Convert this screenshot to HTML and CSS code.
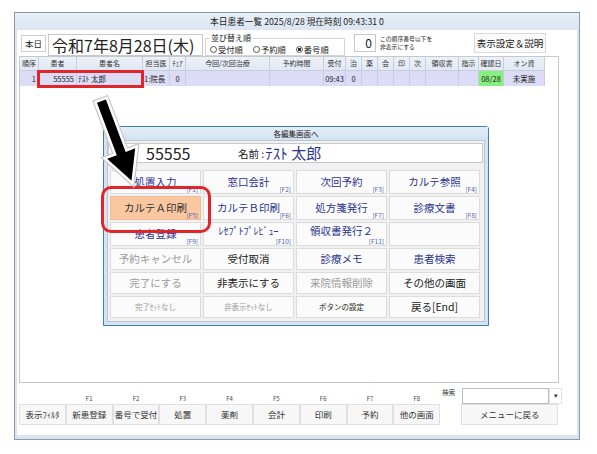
FILE: index.html
```html
<!DOCTYPE html>
<html lang="ja">
<head>
<meta charset="utf-8">
<title>本日患者一覧</title>
<link rel="stylesheet" href="styles.css">
</head>
<body>
<div class="win">
  <div class="win-title">本日患者一覧 2025/8/28 現在時刻 09:43:31 0</div>
  <div class="client">
    <div class="toprow">
      <div class="today-lbl">本日</div>
      <div class="date-box">令和7年8月28日(木)</div>
      <fieldset class="sort">
        <legend>並び替え順</legend>
        <div class="opts">
          <span class="opt"><span class="radio"></span>受付順</span>
          <span class="opt"><span class="radio"></span>予約順</span>
          <span class="opt"><span class="radio on"></span>番号順</span>
        </div>
      </fieldset>
      <div class="zero-box">0</div>
      <div class="hint"><div>この順序番号以下を</div><div>非表示にする</div></div>
      <div class="settings-btn">表示設定＆説明</div>
    </div>
    <div class="list">
      <div class="cols thead">
        <div>順序</div><div>患者</div><div>患者名</div><div>担当医</div><div>ﾁｪｱ</div><div>今回/次回治療</div><div>予約時間</div><div>受付</div><div>治</div><div>薬</div><div>会</div><div>印</div><div>次</div><div>領収書</div><div>指示</div><div>確認日</div><div>オン資</div>
      </div>
      <div class="cols trow">
        <div class="r">1</div><div class="r">55555</div><div class="l">ﾃｽﾄ 太郎</div><div class="l">1:院長</div><div>0</div><div></div><div></div><div>09:43</div><div>0</div><div></div><div></div><div></div><div></div><div></div><div></div><div class="green">08/28</div><div>未実施</div>
      </div>
    </div>
    <div class="bottom">
      <div class="fkeys">
        <div class="fk"><div class="fk-lbl"></div><div class="fk-btn">表示ﾌｨﾙﾀ</div></div>
        <div class="fk"><div class="fk-lbl">F1</div><div class="fk-btn">新患登録</div></div>
        <div class="fk"><div class="fk-lbl">F2</div><div class="fk-btn">番号で受付</div></div>
        <div class="fk"><div class="fk-lbl">F3</div><div class="fk-btn">処置</div></div>
        <div class="fk"><div class="fk-lbl">F4</div><div class="fk-btn">薬剤</div></div>
        <div class="fk"><div class="fk-lbl">F5</div><div class="fk-btn">会計</div></div>
        <div class="fk"><div class="fk-lbl">F6</div><div class="fk-btn">印刷</div></div>
        <div class="fk"><div class="fk-lbl">F7</div><div class="fk-btn">予約</div></div>
        <div class="fk"><div class="fk-lbl">F8</div><div class="fk-btn">他の画面</div></div>
      </div>
      <div class="right-grp">
        <div class="search-row">
          <div class="search-lbl">検索</div>
          <div class="search-input"></div>
          <div class="dd">▾</div>
        </div>
        <div class="menu-btn">メニューに戻る</div>
      </div>
    </div>
  </div>
</div>

<div class="dialog">
  <div class="dlg-title">各編集画面へ</div>
  <div class="dlg-body">
    <div class="idbox">
      <span class="id-lbl">番号</span>
      <span class="id-num">55555</span>
      <span class="name-lbl">名前 :</span>
      <span class="name">ﾃｽﾄ 太郎</span>
    </div>
    <div class="btn-grid">
      <div class="b blue">処置入力<span class="fkey">[F1]</span></div>
      <div class="b blue">窓口会計<span class="fkey">[F2]</span></div>
      <div class="b blue">次回予約<span class="fkey">[F3]</span></div>
      <div class="b blue">カルテ参照<span class="fkey">[F4]</span></div>
      <div class="b orange">カルテＡ印刷<span class="fkey">[F5]</span></div>
      <div class="b blue">カルテＢ印刷<span class="fkey">[F6]</span></div>
      <div class="b blue">処方箋発行<span class="fkey">[F7]</span></div>
      <div class="b blue">診療文書<span class="fkey">[F8]</span></div>
      <div class="b blue">患者登録<span class="fkey">[F9]</span></div>
      <div class="b blue narrow raised">ﾚｾﾌﾟﾄﾌﾟﾚﾋﾞｭｰ<span class="fkey">[F10]</span></div>
      <div class="b blue raised">領収書発行２<span class="fkey">[F11]</span></div>
      <div class="b"></div>
      <div class="b gray">予約キャンセル</div>
      <div class="b black">受付取消</div>
      <div class="b blue">診療メモ</div>
      <div class="b blue">患者検索</div>
      <div class="b gray">完了にする</div>
      <div class="b black">非表示にする</div>
      <div class="b gray">来院情報削除</div>
      <div class="b black">その他の画面</div>
      <div class="b gray small">完了ｾｯﾄなし</div>
      <div class="b gray small">非表示ｾｯﾄなし</div>
      <div class="b black small">ボタンの設定</div>
      <div class="b black">戻る[End]</div>
    </div>
  </div>
</div>

<div class="hl-row"></div>
<div class="hl-btn"></div>

<svg class="arrow" width="597" height="454" viewBox="0 0 597 454">
  <g transform="translate(101 100) rotate(-20.7)">
    <polygon points="-6,0 6,0 6,56 17,56 0,89 -17,56 -6,56" fill="none" stroke="#c8c8c8" stroke-width="5" stroke-linejoin="miter"/>
    <polygon points="-6,0 6,0 6,56 17,56 0,89 -17,56 -6,56" fill="#000" stroke="#fff" stroke-width="2.5" stroke-linejoin="miter"/>
  </g>
</svg>
</body>
</html>
```

FILE: styles.css
```css
* { box-sizing: border-box; }

body {
  margin: 0;
  width: 597px;
  height: 454px;
  position: relative;
  overflow: hidden;
  background: #fff;
  font-family: "Noto Sans CJK JP", "Noto Sans", sans-serif;
  color: #222;
}

/* main window */
.win {
  margin: 12px 0 0 14px;
  width: 566px;
  height: 428px;
  border: 1px solid #8d99a8;
  background: #d9e4f0;
  display: flex;
  flex-direction: column;
}

.win-title {
  height: 17px;
  line-height: 17px;
  text-align: center;
  font-size: 8.7px;
  color: #222;
  background: linear-gradient(#e8eff8, #dbe6f2);
}

.client {
  flex: 1;
  margin: 0 2px 4px;
  background: #fff;
  display: flex;
  flex-direction: column;
}

/* top row */
.toprow {
  height: 26px;
  display: flex;
  align-items: flex-start;
  padding: 3px 0 0 4px;
}

.today-lbl {
  width: 25px;
  height: 17px;
  margin-top: 2px;
  border: 1px solid #d0d0d0;
  font-size: 8.5px;
  line-height: 15px;
  text-align: center;
}

.date-box {
  margin-left: 2px;
  width: 155px;
  height: 22px;
  margin-top: 1px;
  border: 1px solid #c9c9c9;
  font-size: 16px;
  line-height: 20px;
  padding-left: 3px;
  white-space: nowrap;
}

.sort {
  margin: 0 0 0 2px;
  width: 140px;
  height: 23px;
  padding: 0 4px;
  border: 1px solid #d6d6d6;
  min-inline-size: 0;
}

.sort legend {
  font-size: 8px;
  line-height: 10px;
  padding: 0 1px;
  margin-left: 0;
}

.opts {
  display: flex;
  gap: 10px;
  font-size: 8.3px;
  line-height: 10px;
  margin-top: 1px;
}

.opt {
  display: flex;
  align-items: center;
  gap: 1px;
}

.radio {
  width: 7px;
  height: 7px;
  border: 1px solid #555;
  border-radius: 50%;
  display: inline-block;
}

.radio.on {
  background: radial-gradient(circle, #333 0 1.6px, #fff 2px);
}

.zero-box {
  margin-left: 9px;
  width: 22px;
  height: 18px;
  margin-top: 1px;
  border: 1px solid #c9c9c9;
  text-align: right;
  font-size: 12px;
  line-height: 16px;
  padding-right: 3px;
}

.hint {
  margin-left: 4px;
  margin-top: 2px;
  font-size: 5.8px;
  line-height: 8px;
  white-space: nowrap;
}

.settings-btn {
  margin-left: auto;
  margin-right: 31px;
  width: 72px;
  height: 20px;
  border: 1px solid #d9d9d9;
  background: #fafafa;
  font-size: 9.5px;
  line-height: 18px;
  text-align: center;
  white-space: nowrap;
}

/* list */
.list {
  margin-left: 2px;
  width: 540px;
  height: 327px;
  border: 1px solid #c8c8c8;
}

.cols {
  display: grid;
  grid-template-columns: 19px 38px 66px 27px 16px 84px 54px 22px 16px 16px 16px 16px 16px 33px 20px 25px 41px;
  width: 525px;
}

.cols > div {
  white-space: nowrap;
  overflow: hidden;
  text-align: center;
}

.thead > div {
  height: 14px;
  line-height: 13px;
  font-size: 7px;
  background: linear-gradient(#edf1f9, #e2e9f4);
  border-right: 1px solid #c7cedb;
  border-bottom: 1px solid #c7cedb;
  color: #333;
}

.trow > div {
  height: 15px;
  line-height: 15px;
  font-size: 7.5px;
  background: #dcdcf7;
  border-right: 1px solid #cacae4;
  color: #222;
}

.trow > .r { text-align: right; padding-right: 2px; }
.trow > .l { text-align: left; padding-left: 1px; }
.trow > .green { background: #86f07e; }

/* bottom */
.bottom {
  flex: 1;
  display: flex;
  padding: 5px 0 0 2px;
}

.fkeys { display: flex; }

.fk {
  width: 46.8px;
  display: flex;
  flex-direction: column;
}

.fk-lbl {
  height: 16px;
  padding-top: 7px;
  font-size: 6px;
  line-height: 8px;
  text-align: center;
  color: #444;
}

.fk-btn {
  height: 21px;
  border: 1px solid #e0e0e0;
  background: #f7f7f7;
  font-size: 8.5px;
  line-height: 19px;
  text-align: center;
  white-space: nowrap;
  color: #333;
}

.right-grp {
  display: flex;
  flex-direction: column;
}

.search-row {
  height: 16px;
  display: flex;
}

.search-lbl {
  width: 22px;
  padding-left: 2px;
  font-size: 6.5px;
  line-height: 8px;
  color: #333;
}

.search-input {
  width: 87px;
  height: 16px;
  border: 1px solid #bdbdbd;
  background: #fff;
}

.dd {
  width: 13px;
  height: 16px;
  border: 1px solid #e2e2e2;
  font-size: 7px;
  line-height: 13px;
  text-align: center;
  color: #333;
}

.menu-btn {
  margin-left: 21px;
  width: 97px;
  height: 21px;
  border: 1px solid #e0e0e0;
  background: #f7f7f7;
  font-size: 8.5px;
  line-height: 19px;
  text-align: center;
  color: #333;
}

/* dialog (floating window) */
.dialog {
  position: absolute;
  left: 103px;
  top: 126px;
  width: 386px;
  height: 200px;
  border: 1px solid #3f80a8;
  border-radius: 3px 3px 0 0;
  background: #d6e4f2;
  display: flex;
  flex-direction: column;
}

.dlg-title {
  height: 13px;
  line-height: 13px;
  font-size: 7.5px;
  text-align: center;
  color: #222;
  background: linear-gradient(#e4edf7, #d3e2f1);
}

.dlg-body {
  flex: 1;
  margin: 0 3px 3px;
  background: #f1f1f1;
  border: 1px solid #b9c5d2;
  padding-top: 2px;
}

.idbox {
  width: 375px;
  height: 20px;
  border: 1px solid #c9c9c9;
  background: #fff;
  display: flex;
  align-items: center;
  white-space: nowrap;
}

.id-lbl {
  font-size: 9px;
  margin-left: 4px;
  width: 33px;
}

.id-num {
  font-size: 16px;
  line-height: 18px;
  width: 92px;
}

.name-lbl {
  font-size: 10.5px;
}

.name {
  font-size: 15px;
  line-height: 18px;
  color: #2b3390;
  margin-left: 1px;
}

.btn-grid {
  margin: 7px 0 0 2px;
  display: grid;
  grid-template-columns: repeat(4, 91px);
  grid-template-rows: 24px 24px 24px 22px 22px 22px;
  gap: 2px;
}

.b {
  position: relative;
  background: #fbfbfb;
  border: 1px solid #dcdcdc;
  display: flex;
  align-items: center;
  justify-content: center;
  font-size: 10.5px;
  white-space: nowrap;
  padding-bottom: 2px;
}

.b.raised { padding-bottom: 8px; }
.b.blue { color: #2b3390; }
.b.black { color: #222; }
.b.gray { color: #9a9a9a; }
.b.small { font-size: 7.5px; }
.b.narrow { font-size: 10px; }
.b.orange { background: #f9c8a0; color: #333; border-color: #f0bc94; }

.fkey {
  position: absolute;
  right: 2px;
  bottom: 0;
  font-size: 6.5px;
  line-height: 7px;
  color: #5161a8;
}

/* annotation overlays */
.hl-row {
  position: absolute;
  left: 37px;
  top: 70px;
  width: 107px;
  height: 18px;
  border: 3px solid #e1252b;
}

.hl-btn {
  position: absolute;
  left: 101px;
  top: 186px;
  width: 110px;
  height: 47px;
  border: 3px solid #e1252b;
  border-radius: 10px;
}

.arrow {
  position: absolute;
  left: 0;
  top: 0;
  pointer-events: none;
}
```
